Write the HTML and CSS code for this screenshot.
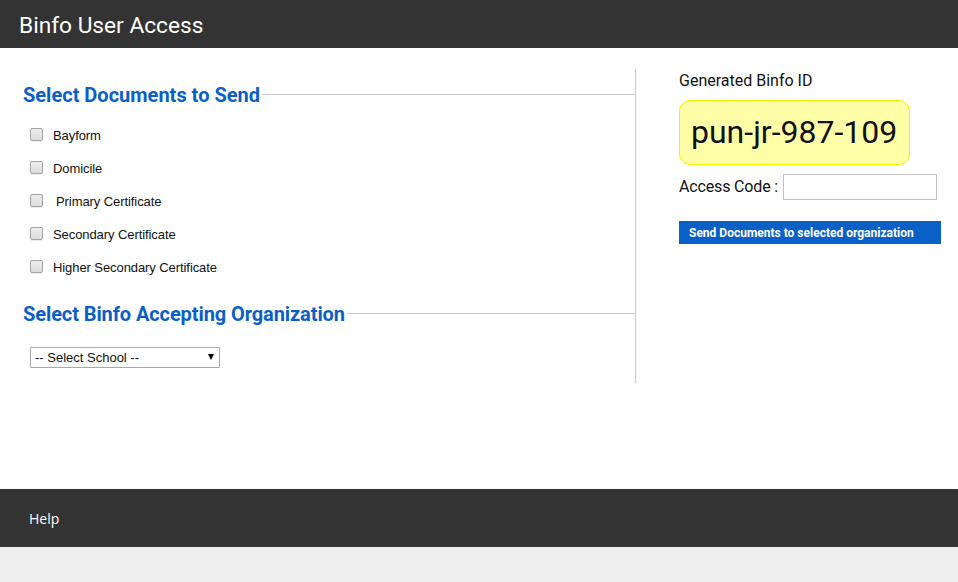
FILE: index.html
```html
<!DOCTYPE html>
<html>
<head>
<meta charset="utf-8">
<title>Binfo User Access</title>
<link rel="stylesheet" href="styles.css">
</head>
<body>
<header class="topbar">
  <h1 class="brand">Binfo User Access</h1>
</header>
<main class="content">
  <section class="left-col">
    <div class="section-head">
      <h2 class="section-title">Select Documents to Send</h2>
      <span class="section-rule"></span>
    </div>
    <ul class="doc-list">
      <li class="doc-item"><input type="checkbox" class="doc-check"><label class="doc-label">Bayform</label></li>
      <li class="doc-item"><input type="checkbox" class="doc-check"><label class="doc-label">Domicile</label></li>
      <li class="doc-item"><input type="checkbox" class="doc-check"><label class="doc-label doc-label-indent">Primary Certificate</label></li>
      <li class="doc-item"><input type="checkbox" class="doc-check"><label class="doc-label">Secondary Certificate</label></li>
      <li class="doc-item"><input type="checkbox" class="doc-check"><label class="doc-label">Higher Secondary Certificate</label></li>
    </ul>
    <div class="section-head section-head-second">
      <h2 class="section-title section-title-second">Select Binfo Accepting Organization</h2>
      <span class="section-rule"></span>
    </div>
    <div class="select-wrap">
      <select class="school-select">
        <option>-- Select School --</option>
      </select>
    </div>
  </section>
  <aside class="right-col">
    <div class="id-label">Generated Binfo ID</div>
    <div class="id-box">pun-jr-987-109</div>
    <div class="access-row">
      <label class="access-label">Access Code :</label>
      <input type="text" class="access-input">
    </div>
    <button class="send-btn">Send Documents to selected organization</button>
  </aside>
</main>
<footer class="footer">
  <a class="help-link">Help</a>
</footer>
</body>
</html>
```

FILE: styles.css
```css
html, body {
  margin: 0;
  padding: 0;
}
body {
  background: #eeeeee;
  font-family: Roboto, "Liberation Sans", sans-serif;
  color: #111;
}
.topbar {
  height: 48px;
  background: #333333;
  display: flex;
  align-items: center;
  padding-left: 19px;
  box-sizing: border-box;
}
.brand {
  margin: 0;
  font-family: Roboto, sans-serif;
  font-weight: 400;
  font-size: 22.7px;
  color: #ffffff;
  line-height: 26px;
  padding-top: 3px;
}
.content {
  background: #ffffff;
  height: 441px;
  box-sizing: border-box;
  padding-top: 21px;
  display: flex;
  align-items: flex-start;
}
.left-col {
  margin-left: 23px;
  width: 613px;
  height: 314px;
  box-sizing: border-box;
  border-right: 1px solid #c8c8c8;
}
.section-head {
  display: flex;
  align-items: center;
  margin-top: 14px;
  height: 24px;
}
.section-head-second {
  margin-top: 18px;
}
.section-title {
  margin: 0;
  font-family: Roboto, sans-serif;
  font-weight: 700;
  font-size: 20px;
  line-height: 24px;
  color: #0b5fc6;
  white-space: nowrap;
}
.section-title-second {
  letter-spacing: -0.09px;
}
.section-rule {
  flex: 1;
  border-top: 1px solid #c8c8c8;
  margin-left: 2px;
  margin-top: -1px;
}
.doc-list {
  list-style: none;
  margin: 12px 0 0 0;
  padding: 0;
}
.doc-item {
  height: 33px;
  display: flex;
  align-items: center;
}
.doc-check {
  appearance: none;
  -webkit-appearance: none;
  margin: -3px 0 0 7px;
  width: 13px;
  height: 13px;
  box-sizing: border-box;
  border: 1px solid #a5a5a5;
  border-radius: 2px;
  background: linear-gradient(#ededed, #dcdcdc);
  box-shadow: 0 1px 1px rgba(0,0,0,0.08);
}
.doc-label {
  margin-left: 10px;
  font-family: "Liberation Sans", Arial, sans-serif;
  font-size: 13px;
  letter-spacing: -0.08px;
  color: #111;
}
.doc-label-indent {
  margin-left: 13px;
}
.select-wrap {
  position: relative;
  margin: 21px 0 0 7px;
  width: 190px;
  height: 21px;
}
.school-select {
  appearance: none;
  -webkit-appearance: none;
  width: 190px;
  height: 21px;
  box-sizing: border-box;
  border: 1px solid #a9a9a9;
  border-radius: 1px;
  background: #ffffff;
  font-family: "Liberation Sans", Arial, sans-serif;
  font-size: 13px;
  color: #111;
  padding: 0 0 0 4px;
  margin: 0;
}
.select-wrap::after {
  content: "";
  position: absolute;
  right: 6px;
  top: 7px;
  border-left: 3.5px solid transparent;
  border-right: 3.5px solid transparent;
  border-top: 6px solid #000;
  pointer-events: none;
}
.right-col {
  margin-left: 43px;
  display: flex;
  flex-direction: column;
  align-items: flex-start;
}
.id-label {
  margin-top: 2px;
  font-size: 16px;
  line-height: 20px;
  color: #111;
}
.id-box {
  margin-top: 9px;
  width: 231px;
  height: 65px;
  box-sizing: border-box;
  background: #ffffa8;
  border: 1px solid #f2f200;
  border-radius: 11px;
  padding-left: 11px;
  font-size: 32px;
  line-height: 63px;
  color: #111;
}
.access-row {
  margin-top: 9px;
  display: flex;
  align-items: center;
}
.access-label {
  font-size: 16px;
  line-height: 20px;
  letter-spacing: -0.15px;
  margin-bottom: 0;
  color: #111;
}
.access-input {
  margin: 0 0 0 5px;
  width: 154px;
  height: 26px;
  box-sizing: border-box;
  border: 1px solid #c0c0c0;
  padding: 0 4px;
}
.send-btn {
  margin-top: 21px;
  width: 262px;
  height: 23px;
  box-sizing: border-box;
  background: #0a60c6;
  border: none;
  border-radius: 0;
  color: #ffffff;
  font-family: Roboto, sans-serif;
  font-weight: 700;
  font-size: 12px;
  padding: 0 10px;
  text-align: left;
  white-space: nowrap;
}
.footer {
  height: 58px;
  background: #333333;
  display: flex;
  align-items: center;
  padding-left: 29px;
  box-shadow: 0 2px 4px rgba(0,0,0,0.15);
}
.help-link {
  font-family: "Open Sans", "Liberation Sans", sans-serif;
  font-size: 14px;
  color: #ffffff;
}
```
